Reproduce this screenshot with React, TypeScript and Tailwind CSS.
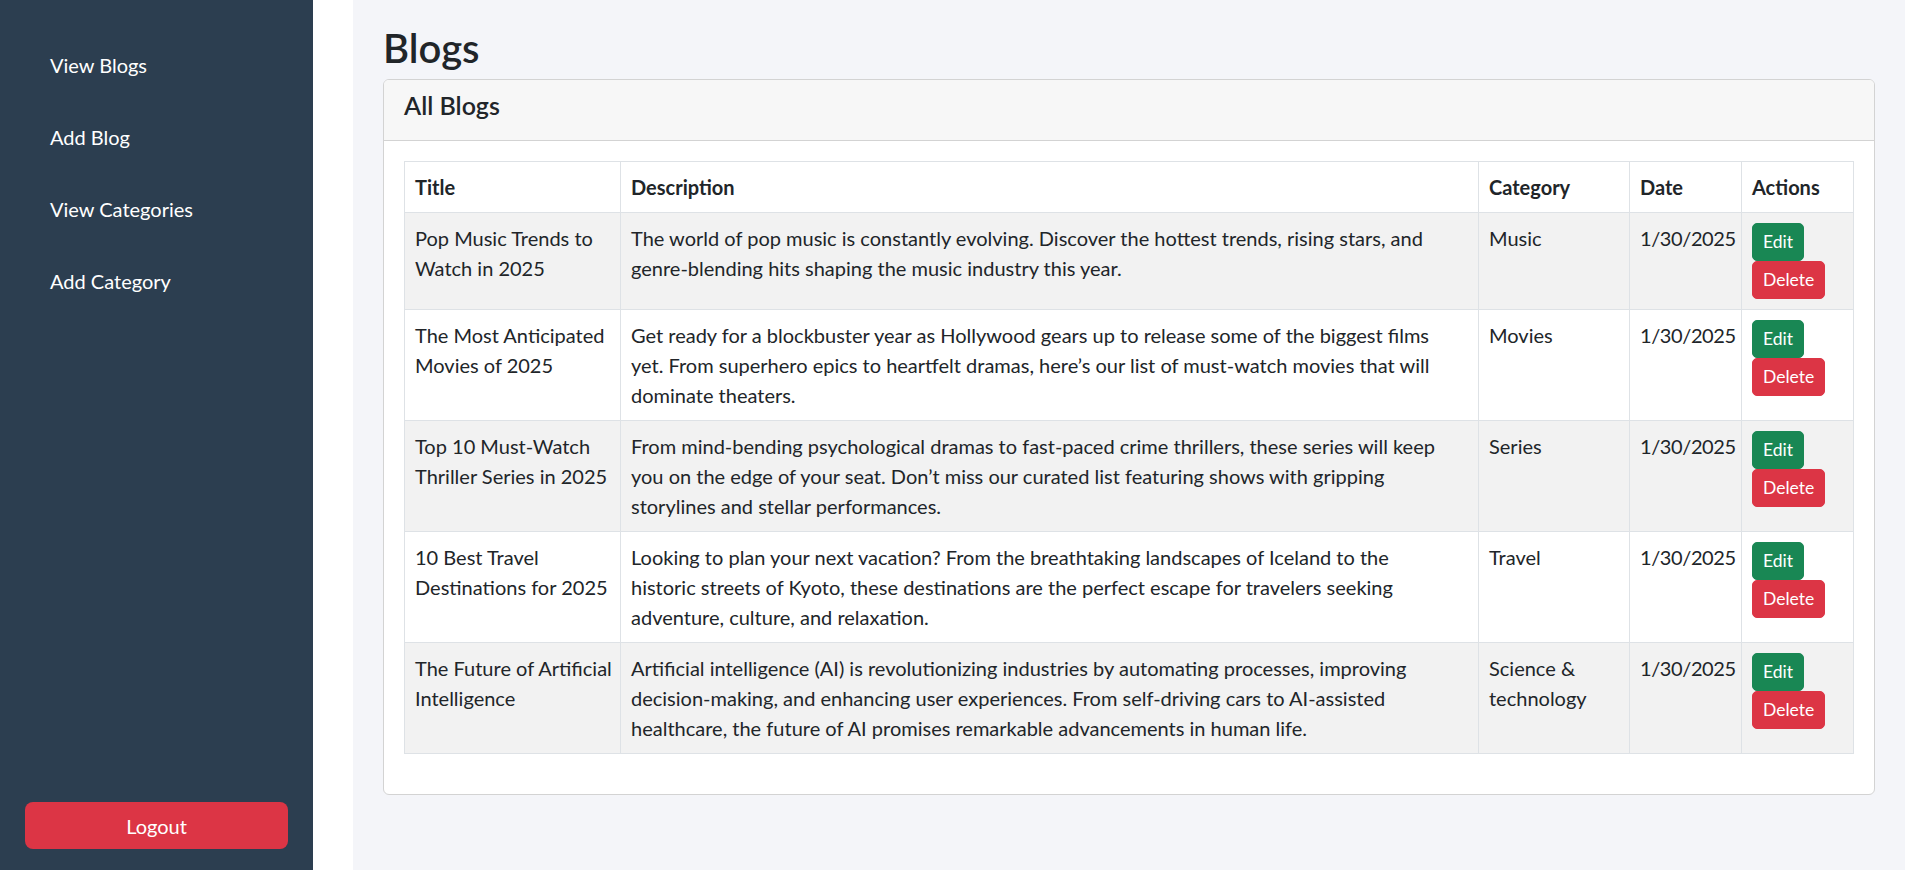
import React from 'react'

// lines are kept as in the design so the table wraps the same way
const blogs = [
  {
    title: ['Pop Music Trends to', 'Watch in 2025'],
    description: [
      'The world of pop music is constantly evolving. Discover the hottest trends, rising stars, and',
      'genre-blending hits shaping the music industry this year.',
    ],
    category: ['Music'],
    date: '1/30/2025',
  },
  {
    title: ['The Most Anticipated', 'Movies of 2025'],
    description: [
      'Get ready for a blockbuster year as Hollywood gears up to release some of the biggest films',
      'yet. From superhero epics to heartfelt dramas, here’s our list of must-watch movies that will',
      'dominate theaters.',
    ],
    category: ['Movies'],
    date: '1/30/2025',
  },
  {
    title: ['Top 10 Must-Watch', 'Thriller Series in 2025'],
    description: [
      'From mind-bending psychological dramas to fast-paced crime thrillers, these series will keep',
      'you on the edge of your seat. Don’t miss our curated list featuring shows with gripping',
      'storylines and stellar performances.',
    ],
    category: ['Series'],
    date: '1/30/2025',
  },
  {
    title: ['10 Best Travel', 'Destinations for 2025'],
    description: [
      'Looking to plan your next vacation? From the breathtaking landscapes of Iceland to the',
      'historic streets of Kyoto, these destinations are the perfect escape for travelers seeking',
      'adventure, culture, and relaxation.',
    ],
    category: ['Travel'],
    date: '1/30/2025',
  },
  {
    title: ['The Future of Artificial', 'Intelligence'],
    description: [
      'Artificial intelligence (AI) is revolutionizing industries by automating processes, improving',
      'decision-making, and enhancing user experiences. From self-driving cars to AI-assisted',
      'healthcare, the future of AI promises remarkable advancements in human life.',
    ],
    category: ['Science &', 'technology'],
    date: '1/30/2025',
  },
]

function Lines({ lines }: { lines: string[] }) {
  return (
    <>
      {lines.map((line) => (
        <span key={line} className="block whitespace-nowrap">
          {line}
        </span>
      ))}
    </>
  )
}

function Sidebar() {
  return (
    <aside className="w-[313px] shrink-0 bg-[#2c3e50] flex flex-col justify-between px-[25px] pt-[50px] pb-[21px]">
      <nav className="flex flex-col gap-[42px] pl-[25px]">
        {['View Blogs', 'Add Blog', 'View Categories', 'Add Category'].map((item) => (
          <a key={item} href="#" className="text-[20px] leading-[30px] text-white">
            {item}
          </a>
        ))}
      </nav>
      <button className="w-full h-[47px] rounded-[8px] bg-[#dc3545] text-white text-[20px]">Logout</button>
    </aside>
  )
}

export default function App() {
  return (
    <div className="flex h-screen bg-white text-[#212529] font-['Lato',sans-serif]">
      <Sidebar />

      {/* Main content */}
      <main className="flex-1 ml-[40px] mr-[12px] bg-[#f4f5f9] px-[30px] pt-[24px]">
        <h2 className="text-[40px] leading-[48px] font-semibold mb-[7px]">Blogs</h2>

        <div className="bg-white border border-[#d3d3d3] rounded-[6px] overflow-hidden">
          <div className="bg-[#f7f7f7] border-b border-[#d3d3d3] px-[20px] pt-[10px] pb-[20px]">
            <h5 className="text-[25px] leading-[30px] font-semibold">All Blogs</h5>
          </div>

          <div className="p-[20px]">
            <table className="w-full table-fixed border-collapse text-[20px] leading-[30px] mb-[20px]">
              <colgroup>
                <col className="w-[216px]" />
                <col />
                <col className="w-[151px]" />
                <col className="w-[112px]" />
                <col className="w-[112px]" />
              </colgroup>
              <thead>
                <tr>
                  {['Title', 'Description', 'Category', 'Date', 'Actions'].map((h) => (
                    <th key={h} className="border border-[#dee2e6] px-[10px] py-[10px] text-left font-bold">
                      {h}
                    </th>
                  ))}
                </tr>
              </thead>
              <tbody>
                {blogs.map((blog, i) => (
                  <tr key={blog.date + i} className={i % 2 === 0 ? 'bg-[#f2f2f2]' : 'bg-white'}>
                    <td className="border border-[#dee2e6] p-[10px] align-top">
                      <Lines lines={blog.title} />
                    </td>
                    <td className="border border-[#dee2e6] p-[10px] align-top">
                      <Lines lines={blog.description} />
                    </td>
                    <td className="border border-[#dee2e6] p-[10px] align-top">
                      <Lines lines={blog.category} />
                    </td>
                    <td className="border border-[#dee2e6] p-[10px] align-top tracking-[-0.4px]">{blog.date}</td>
                    <td className="border border-[#dee2e6] p-[10px] align-top">
                      <div className="flex flex-col items-start">
                        <button className="bg-[#198754] text-white text-[17.5px] leading-[26px] px-[10px] py-[5px] rounded-[5px] border border-[#198754]">
                          Edit
                        </button>
                        <button className="bg-[#dc3545] text-white text-[17.5px] leading-[26px] px-[10px] py-[5px] rounded-[5px] border border-[#dc3545]">
                          Delete
                        </button>
                      </div>
                    </td>
                  </tr>
                ))}
              </tbody>
            </table>
          </div>
        </div>
      </main>
    </div>
  )
}
